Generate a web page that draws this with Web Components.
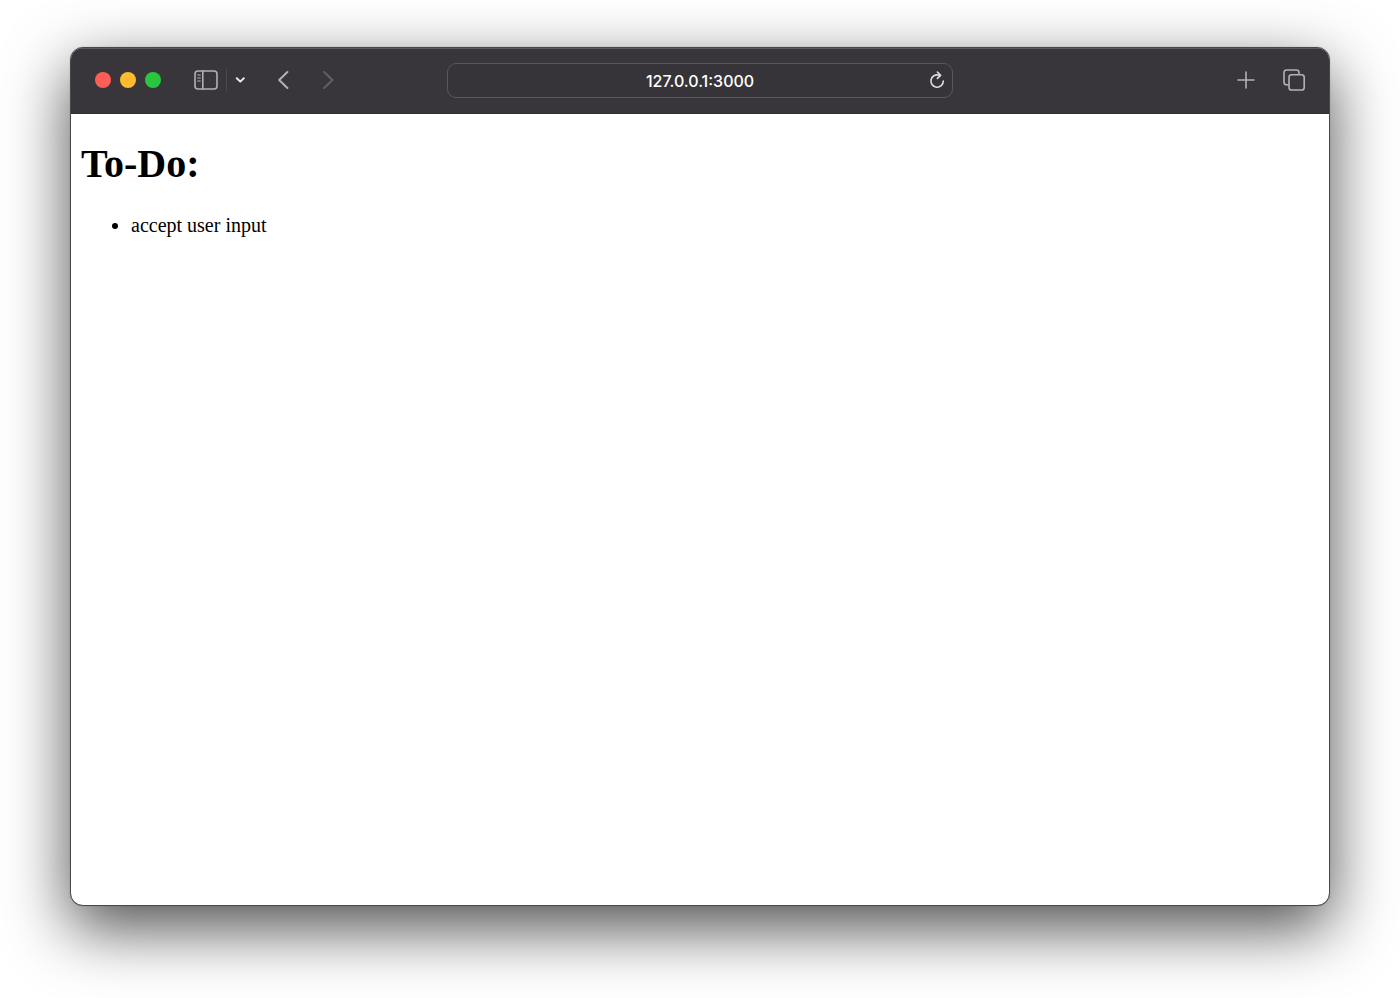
<!DOCTYPE html>
<html lang="en">
<head>
<meta charset="utf-8">
<title>To-Do</title>
<style>
html { height: 100%; background: #fff; }
body { margin: 0; display: flex; box-sizing: border-box; padding: 47px 70px 92px; min-height: 100vh; }
</style>
</head>
<body>
<browser-window>
  <browser-toolbar slot="toolbar" address="127.0.0.1:3000"></browser-toolbar>
  <todo-list heading="To-Do:"><todo-item>accept user input</todo-item></todo-list>
</browser-window>

<script>
class BrowserWindow extends HTMLElement {
  constructor() {
    super();
    this.attachShadow({ mode: "open" }).innerHTML = `
      <style>
        :host {
          display: flex; flex-direction: column; flex: 1; min-width: 0;
          box-sizing: border-box; border: 1px solid #48474a; border-radius: 13px;
          background: #fff; overflow: hidden;
          box-shadow: 0 22px 64px rgba(0, 0, 0, .7), 0 0 1px rgba(0, 0, 0, .4);
        }
        main { flex: 1; padding: 0 10px; overflow: auto; }
      </style>
      <slot name="toolbar"></slot>
      <main><slot></slot></main>`;
  }
}

class TrafficLights extends HTMLElement {
  constructor() {
    super();
    this.attachShadow({ mode: "open" }).innerHTML = `
      <style>
        :host { display: flex; gap: 9px; }
        button { width: 16px; height: 16px; padding: 0; border: 0; border-radius: 50%; }
        .close { background: #ff5e57; }
        .minimize { background: #febb2e; }
        .zoom { background: #27c83f; }
      </style>
      <button class="close" aria-label="Close"></button>
      <button class="minimize" aria-label="Minimize"></button>
      <button class="zoom" aria-label="Zoom"></button>`;
  }
}

const ICONS = {
  sidebar: [24, 20, `<rect x="1" y="1" width="22" height="18" rx="3"/><path d="M8.8 1v18"/><path stroke-width="1.2" d="M3.7 5h2.6M3.7 8h2.6M3.7 11h2.6"/>`],
  menu: [10, 8, `<path stroke-width="2" d="M1.8 2.2 5.3 5.6 8.8 2.2"/>`],
  back: [12, 20, `<path stroke-width="2" d="M9.4 2 1.2 10l8.2 8"/>`],
  forward: [12, 20, `<path stroke-width="2" d="M1.2 2 9.4 10l-8.2 8"/>`],
  reload: [16, 18, `<path d="M10.4 4.3A6.2 6.2 0 1 0 14.3 10"/><path d="M8.4 1 11.6 4.4 8.4 7.4"/>`],
  plus: [18, 18, `<path d="M9 1v16M1 9h16"/>`],
  tabs: [22, 22, `<path d="M5.4 15.8H3.6a2.6 2.6 0 0 1-2.6-2.6V3.6A2.6 2.6 0 0 1 3.6 1h9.8A2.6 2.6 0 0 1 16 3.6v1.6"/><rect x="6" y="5.8" width="15.2" height="15.2" rx="2.6"/>`]
};

class IconButton extends HTMLElement {
  constructor() {
    super();
    this.attachShadow({ mode: "open" });
  }
  connectedCallback() {
    const [w, h, shape] = ICONS[this.getAttribute("icon")];
    this.shadowRoot.innerHTML = `
      <style>
        :host { display: flex; }
        button { display: flex; padding: 0; border: 0; background: none; color: inherit; }
        svg { fill: none; stroke: currentColor; stroke-width: 1.6; stroke-linecap: round; stroke-linejoin: round; }
      </style>
      <button aria-label="${this.getAttribute("label")}" ${this.hasAttribute("disabled") ? "disabled" : ""}>
        <svg width="${w}" height="${h}" viewBox="0 0 ${w} ${h}" aria-hidden="true">${shape}</svg>
      </button>`;
  }
}

class AddressBar extends HTMLElement {
  constructor() {
    super();
    this.attachShadow({ mode: "open" });
  }
  connectedCallback() {
    this.shadowRoot.innerHTML = `
      <style>
        :host {
          display: grid; grid-template-columns: 16px 1fr 16px; align-items: center;
          box-sizing: border-box; height: 35px; padding: 0 7px;
          border: 1px solid #58575b; border-radius: 9px; background: #363439;
        }
        input {
          grid-column: 2; box-sizing: border-box; min-width: 0; height: 33px; padding: 2px 0 0;
          border: 0; outline: 0; background: none;
          color: #fff; text-align: center; font: 500 16px/31px Inter, sans-serif;
        }
        icon-button { color: #dddce0; }
      </style>
      <input type="text" aria-label="Address" value="${this.getAttribute("value")}">
      <icon-button icon="reload" label="Reload"></icon-button>`;
  }
}

class BrowserToolbar extends HTMLElement {
  constructor() {
    super();
    this.attachShadow({ mode: "open" });
  }
  connectedCallback() {
    this.shadowRoot.innerHTML = `
      <style>
        :host {
          display: grid; grid-template-columns: 1fr minmax(0, 506px) 1fr; align-items: center;
          box-sizing: border-box; height: 66px; flex: none; padding: 0 24px 2px;
          background: #38363b; color: #b3b1b6;
          box-shadow: inset 0 1px #5c5b5f, inset 0 -1px #302e33;
        }
        nav, .left, .right, .views { display: flex; align-items: center; }
        .left { gap: 33px; }
        .views { gap: 8px; }
        .views::before { content: ""; order: 1; width: 1px; height: 22px; background: #4b4a4e; }
        .views [icon=menu] { order: 2; color: #e8e7ea; }
        nav { gap: 33px; }
        [disabled] { color: #626065; }
        .right { justify-content: flex-end; gap: 28px; }
      </style>
      <div class="left">
        <traffic-lights></traffic-lights>
        <div class="views">
          <icon-button icon="sidebar" label="Show sidebar"></icon-button>
          <icon-button icon="menu" label="Tab groups"></icon-button>
        </div>
        <nav aria-label="History">
          <icon-button icon="back" label="Back"></icon-button>
          <icon-button icon="forward" label="Forward" disabled></icon-button>
        </nav>
      </div>
      <address-bar value="${this.getAttribute("address")}"></address-bar>
      <div class="right">
        <icon-button icon="plus" label="New tab"></icon-button>
        <icon-button icon="tabs" label="Tab overview"></icon-button>
      </div>`;
  }
}

class TodoList extends HTMLElement {
  constructor() {
    super();
    this.attachShadow({ mode: "open" });
  }
  connectedCallback() {
    this.shadowRoot.innerHTML = `
      <style>
        :host { display: block; color: #000; font: 20px/23px "Liberation Serif", serif; }
        h1 { margin: 27px 0; font-size: 40px; line-height: 46px; font-weight: bold; }
        div { padding-left: 50px; }
      </style>
      <h1>${this.getAttribute("heading")}</h1>
      <div role="list"><slot></slot></div>`;
  }
}

class TodoItem extends HTMLElement {
  constructor() {
    super();
    this.attachShadow({ mode: "open" }).innerHTML = `
      <style>:host { display: list-item; list-style: disc outside; }</style>
      <slot></slot>`;
  }
  connectedCallback() { this.setAttribute("role", "listitem"); }
}

customElements.define("icon-button", IconButton);
customElements.define("traffic-lights", TrafficLights);
customElements.define("address-bar", AddressBar);
customElements.define("browser-toolbar", BrowserToolbar);
customElements.define("todo-item", TodoItem);
customElements.define("todo-list", TodoList);
customElements.define("browser-window", BrowserWindow);
</script>
</body>
</html>
